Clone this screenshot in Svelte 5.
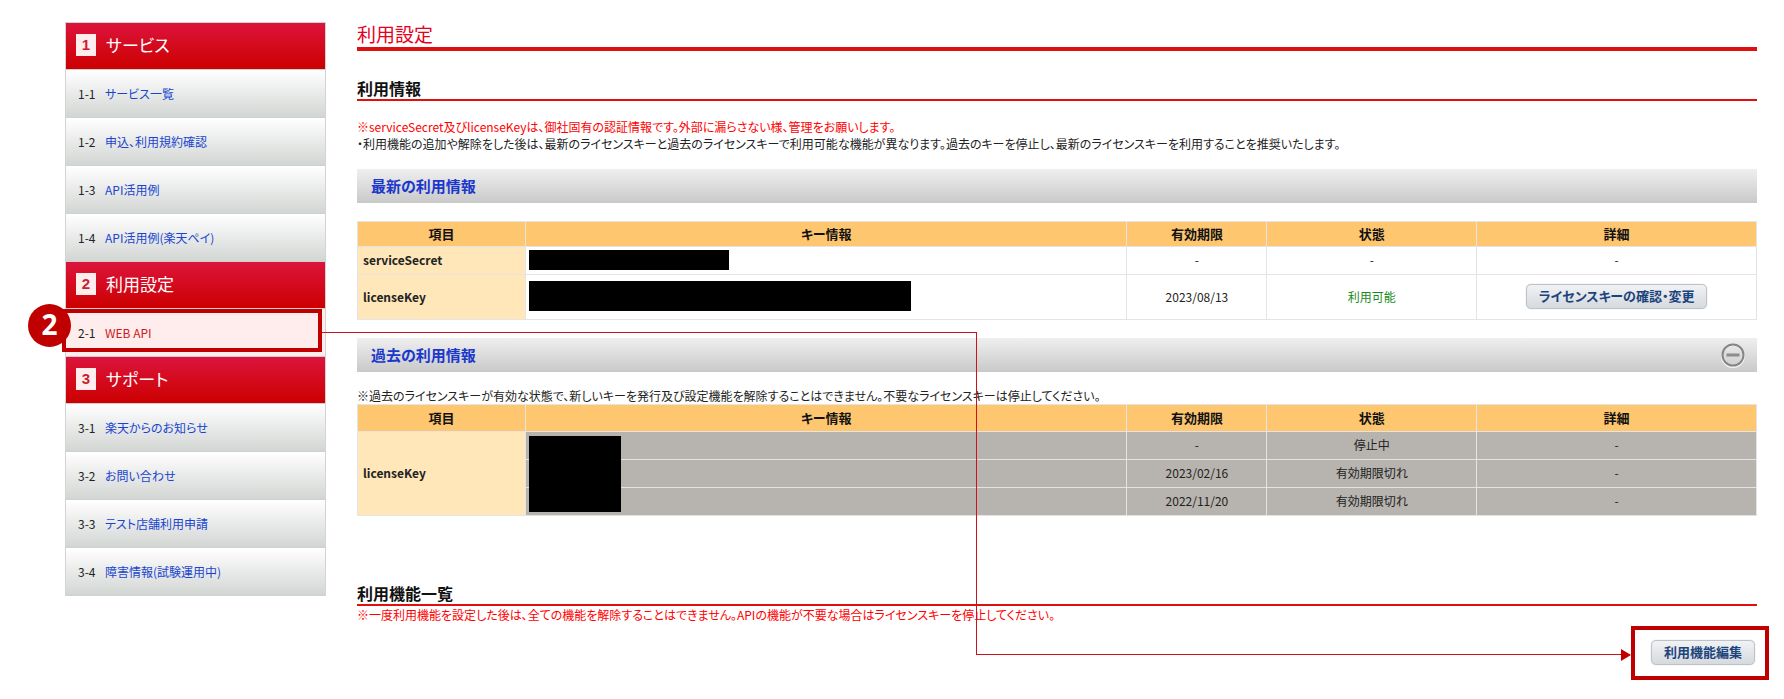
<script lang="ts">
	const sections = [
		{
			no: "1",
			title: "サービス",
			items: [
				{ no: "1-1", label: "サービス一覧" },
				{ no: "1-2", label: "申込、利用規約確認" },
				{ no: "1-3", label: "API活用例" },
				{ no: "1-4", label: "API活用例(楽天ペイ)" }
			]
		},
		{
			no: "2",
			title: "利用設定",
			items: [{ no: "2-1", label: "WEB API", active: true }]
		},
		{
			no: "3",
			title: "サポート",
			items: [
				{ no: "3-1", label: "楽天からのお知らせ" },
				{ no: "3-2", label: "お問い合わせ" },
				{ no: "3-3", label: "テスト店舗利用申請" },
				{ no: "3-4", label: "障害情報(試験運用中)" }
			]
		}
	];
	const columns = ["項目", "キー情報", "有効期限", "状態", "詳細"];
	const oldKeys = [
		{ limit: "-", status: "停止中" },
		{ limit: "2023/02/16", status: "有効期限切れ" },
		{ limit: "2022/11/20", status: "有効期限切れ" }
	];
	let open = $state(true);
</script>

{#snippet head()}
	<colgroup>
		<col class="col-item" />
		<col />
		<col class="col-limit" />
		<col class="col-status" />
		<col class="col-detail" />
	</colgroup>
	<thead>
		<tr>
			{#each columns as column}
				<th scope="col">{column}</th>
			{/each}
		</tr>
	</thead>
{/snippet}

<div class="page">
	<nav class="sidebar">
		{#each sections as section}
			<section>
				<h2><span class="badge">{section.no}</span>{section.title}</h2>
				<ul>
					{#each section.items as item}
						<li class:active={item.active}>
							<span class="item-no">{item.no}</span>
							<a href="#{item.no}">{item.label}</a>
							{#if item.active}
								<span class="frame"></span>
								<span class="step">2</span>
							{/if}
						</li>
					{/each}
				</ul>
			</section>
		{/each}
	</nav>

	<main>
		<h1>利用設定</h1>

		<h2>利用情報</h2>
		<div class="notes">
			<p class="red">
				※serviceSecret及びlicenseKeyは、御社固有の認証情報です。外部に漏らさない様、管理をお願いします。
			</p>
			<p>
				・利用機能の追加や解除をした後は、最新のライセンスキーと過去のライセンスキーで利用可能な機能が異なります。過去のキーを停止し、最新のライセンスキーを利用することを推奨いたします。
			</p>
		</div>

		<h3>最新の利用情報</h3>
		<table class="current">
			{@render head()}
			<tbody>
				<tr>
					<th scope="row">serviceSecret</th>
					<td><div class="mask secret"></div></td>
					<td>-</td>
					<td>-</td>
					<td>-</td>
				</tr>
				<tr class="tall">
					<th scope="row">licenseKey</th>
					<td><div class="mask license"></div></td>
					<td>2023/08/13</td>
					<td class="ok">利用可能</td>
					<td><button class="btn" type="button">ライセンスキーの確認・変更</button></td>
				</tr>
			</tbody>
		</table>

		<h3>
			過去の利用情報
			<button class="toggle" type="button" aria-label="開閉" onclick={() => (open = !open)}>
				<svg width="26" height="26" viewBox="0 0 26 26" fill="none">
					<circle cx="13" cy="14" r="11" stroke="#f4f4f4" stroke-width="2" />
					<circle cx="13" cy="13" r="10.5" stroke="#858585" stroke-width="2" />
					<path d="M6.5 13h13" stroke="#8c8c8c" stroke-width="3" />
				</svg>
			</button>
		</h3>
		{#if open}
			<p class="table-note">
				※過去のライセンスキーが有効な状態で、新しいキーを発行及び設定機能を解除することはできません。不要なライセンスキーは停止してください。
			</p>
			<table class="past">
				{@render head()}
				<tbody>
					{#each oldKeys as key, i}
						<tr>
							{#if i === 0}
								<th scope="row" rowspan={oldKeys.length}>licenseKey</th>
							{/if}
							<td class:key-cell={i === 0}>
								{#if i === 0}<div class="mask old"></div>{/if}
							</td>
							<td>{key.limit}</td>
							<td>{key.status}</td>
							<td>-</td>
						</tr>
					{/each}
				</tbody>
			</table>
		{/if}

		<h2 class="features">利用機能一覧</h2>
		<p class="red">
			※一度利用機能を設定した後は、全ての機能を解除することはできません。APIの機能が不要な場合はライセンスキーを停止してください。
		</p>
		<div class="actions">
			<div class="edit">
				<button class="btn" type="button">利用機能編集</button>
				<span class="frame"></span>
			</div>
		</div>
	</main>

	<!-- line from the menu item to the edit button -->
	<div class="line-down"></div>
	<div class="line-across"></div>
</div>

<style>
	:global(body) {
		margin: 0;
		background: #fff;
	}
	.page {
		position: relative;
		display: flex;
		align-items: flex-start;
		gap: 31px;
		padding: 20px 27px 18px 65px;
		font-family: "Noto Sans CJK JP", sans-serif;
		font-feature-settings: "palt";
		font-size: 12px;
		line-height: 17px;
		color: #222;
	}
	h1,
	h2,
	h3,
	p,
	ul {
		margin: 0;
		padding: 0;
	}

	.sidebar {
		flex: 0 0 261px;
		box-sizing: border-box;
		margin-top: 2px;
		border: 1px solid #d3d3d3;
		border-bottom: 0;
	}
	.sidebar section {
		border-bottom: 1px solid #d0d0d0;
	}
	.sidebar h2 {
		display: flex;
		align-items: center;
		gap: 10px;
		box-sizing: border-box;
		height: 46px;
		padding: 0 0 2px 10px;
		background: linear-gradient(#dc143c, #c00);
		color: #fff;
		font-size: 17px;
		font-weight: 400;
		line-height: 24px;
	}
	.badge {
		width: 20px;
		height: 22px;
		background: #ffecec;
		color: #c81e32;
		font-family: "Liberation Sans", sans-serif;
		font-size: 15px;
		font-weight: 700;
		line-height: 22px;
		text-align: center;
	}
	.sidebar ul {
		list-style: none;
	}
	.sidebar li {
		position: relative;
		display: flex;
		align-items: center;
		box-sizing: border-box;
		height: 48px;
		padding-left: 12px;
		border-top: 1px solid #d0d0d0;
		background: linear-gradient(#fff, #d2d6d3);
	}
	.sidebar li.active {
		background: #ffecec;
	}
	.item-no {
		width: 27px;
	}
	.sidebar a {
		color: #1a44d0;
		text-decoration: none;
	}
	.sidebar .active a {
		color: #d01820;
	}

	.frame {
		position: absolute;
		border: 4px solid #c00000;
		pointer-events: none;
	}
	.sidebar .frame {
		inset: 0 3px 4px -4px;
	}
	.step {
		position: absolute;
		left: -38px;
		top: -5px;
		width: 43px;
		height: 43px;
		border-radius: 50%;
		background: #c00000;
		color: #fff;
		font-family: "Open Sans", sans-serif;
		font-size: 28px;
		font-weight: 700;
		line-height: 41px;
		text-align: center;
	}

	main {
		flex: 1;
		min-width: 0;
	}
	h1 {
		border-bottom: 4px solid #e01010;
		color: #e60020;
		font-size: 19px;
		font-weight: 400;
		line-height: 27px;
	}
	main h2 {
		margin-top: 27px;
		border-bottom: 2px solid #e01010;
		color: #111;
		font-size: 16px;
		font-weight: 700;
		line-height: 21px;
	}
	main h2.features {
		margin-top: 67px;
	}
	.red {
		color: #f00;
	}
	.notes {
		margin: 17px 0;
	}
	h3 {
		display: flex;
		align-items: center;
		justify-content: space-between;
		height: 34px;
		padding: 0 11px 0 14px;
		background: linear-gradient(#efefef, #c9c9c9);
		color: #1a38cc;
		font-size: 15px;
		font-weight: 700;
		line-height: 20px;
	}
	.toggle {
		padding: 0;
		border: 0;
		background: none;
		cursor: pointer;
	}
	.toggle svg {
		display: block;
	}

	table {
		width: 100%;
		table-layout: fixed;
		border-collapse: collapse;
	}
	.current {
		margin: 18px 0;
	}
	.table-note {
		margin-top: 15px;
	}
	.col-item {
		width: 12%;
	}
	.col-limit {
		width: 10%;
	}
	.col-status {
		width: 15%;
	}
	.col-detail {
		width: 20%;
	}
	th,
	td {
		box-sizing: border-box;
		height: 28px;
		padding: 0 3px 2px;
		border: 1px solid #e4e4e4;
		text-align: center;
	}
	thead th {
		height: 25px;
		background: #ffc670;
		color: #111;
		font-size: 13px;
		font-weight: 700;
	}
	tbody th {
		padding-left: 5px;
		background: #ffe7ba;
		font-weight: 700;
		text-align: left;
	}
	.tall td {
		height: 45px;
	}
	.ok {
		color: #1a8c1a;
	}
	.past thead th {
		height: 27px;
	}
	.past td {
		background: #b7b3ae;
	}
	.past .key-cell {
		position: relative;
		z-index: 1;
	}
	.mask {
		background: #000;
	}
	.secret {
		width: 200px;
		height: 20px;
	}
	.license {
		width: 382px;
		height: 30px;
		max-width: 100%;
	}
	.old {
		position: absolute;
		left: 3px;
		top: 4px;
		width: 92px;
		height: 76px;
	}

	.btn {
		height: 25px;
		padding: 0 12px 2px;
		border: 1px solid #bcc2c8;
		border-radius: 5px;
		background: linear-gradient(#f1f2f4, #d5dade);
		box-shadow: 0 0 1px #aaa;
		color: #1c447c;
		font: 700 13px/21px "Noto Sans CJK JP", sans-serif;
		font-feature-settings: "palt";
		cursor: pointer;
	}
	.actions {
		display: flex;
		justify-content: flex-end;
		padding: 17px 2px 0 0;
	}
	.edit {
		position: relative;
	}
	.edit .btn {
		display: block;
	}
	.edit .frame {
		inset: -14px -14px -15px -20px;
	}

	.line-down,
	.line-across {
		position: absolute;
		box-sizing: border-box;
		border: 0 solid #c8141c;
		pointer-events: none;
	}
	.line-down {
		z-index: 2;
		left: 322px;
		top: 332px;
		width: 655px;
		height: 323px;
		border-width: 1px 1px 0 0;
	}
	.line-across {
		left: 976px;
		right: 154px;
		top: 654px;
		border-bottom-width: 1px;
	}
	.line-across::after {
		content: "";
		position: absolute;
		right: -1px;
		top: -5px;
		border: 6px solid transparent;
		border-right: 0;
		border-left: 10px solid #c00000;
	}
</style>
